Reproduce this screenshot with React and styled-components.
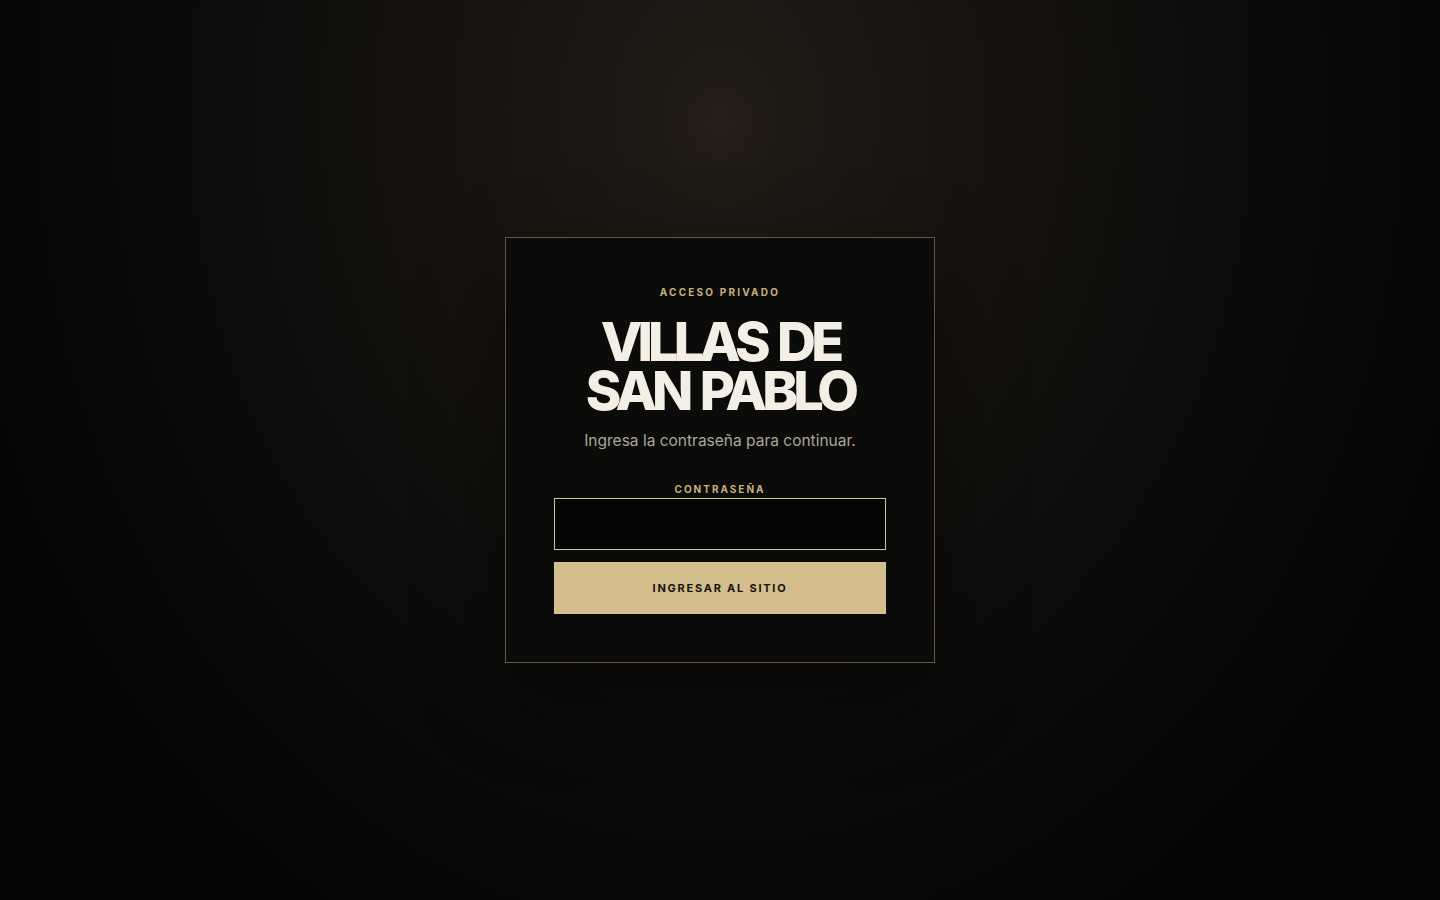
import React, { useState } from 'react'
import styled, { createGlobalStyle } from 'styled-components'

const GlobalStyle = createGlobalStyle`
  html, body {
    margin: 0;
    padding: 0;
    height: 100%;
    background: #060606;
  }
  #root {
    height: 100%;
  }
  * {
    box-sizing: border-box;
  }
`

const Page = styled.main`
  min-height: 100vh;
  display: flex;
  align-items: center;
  justify-content: center;
  font-family: Inter, "Noto Sans", sans-serif;
  background:
    radial-gradient(circle at 50% 14%, rgba(60, 34, 26, 0.3) 0, rgba(60, 34, 26, 0) 60px),
    radial-gradient(ellipse 760px 920px at 50% 12%, #201c16 0%, #16130f 35%, #0c0b0a 70%, #050505 100%);
  background-color: #050505;
`

const Card = styled.section`
  width: 430px;
  padding: 48px;
  border: 1px solid rgba(201, 176, 120, 0.45);
  background: #0b0b0a;
  box-shadow: 0 30px 80px rgba(0, 0, 0, 0.45);
  display: flex;
  flex-direction: column;
  align-items: center;
  text-align: center;
`

const Eyebrow = styled.p`
  margin: 0;
  font-size: 10px;
  line-height: 13px;
  font-weight: 700;
  letter-spacing: 0.22em;
  color: #c9b07c;
  text-transform: uppercase;
`

const Title = styled.h1`
  margin: 18px 0 0;
  font-family: Inter, "Noto Sans", sans-serif;
  font-size: 54px;
  line-height: 49px;
  font-weight: 800;
  letter-spacing: -0.09em;
  word-spacing: 0.08em;
  color: #f4efe4;
  text-transform: uppercase;
`

const Subtitle = styled.p`
  margin: 14px 0 0;
  font-size: 15.5px;
  line-height: 24px;
  font-weight: 400;
  color: #aaa59b;
`

const Form = styled.form`
  width: 100%;
  margin-top: 30px;
  display: flex;
  flex-direction: column;
  align-items: center;
`

const Label = styled.label`
  font-size: 10px;
  line-height: 13px;
  font-weight: 700;
  letter-spacing: 0.2em;
  color: #c9b07c;
  text-transform: uppercase;
  margin-bottom: 2px;
`

const Input = styled.input`
  width: 100%;
  height: 52px;
  border: 1px solid #d4c294;
  background: #050505;
  color: #f4efe4;
  padding: 0 16px;
  font-family: inherit;
  font-size: 16px;
  outline: none;
`

const Button = styled.button`
  width: 100%;
  height: 52px;
  margin-top: 12px;
  border: none;
  background: #d5be8e;
  color: #17130e;
  font-family: inherit;
  font-size: 11px;
  font-weight: 700;
  letter-spacing: 0.16em;
  text-transform: uppercase;
  cursor: pointer;
`

export default function App() {
  const [password, setPassword] = useState('')

  return (
    <>
      <GlobalStyle />
      <Page>
        <Card>
          <Eyebrow>Acceso privado</Eyebrow>
          <Title>Villas de<br />San Pablo</Title>
          <Subtitle>Ingresa la contraseña para continuar.</Subtitle>
          <Form onSubmit={(e) => e.preventDefault()}>
            <Label htmlFor="password">Contraseña</Label>
            <Input
              id="password"
              type="password"
              value={password}
              onChange={(e) => setPassword(e.target.value)}
            />
            <Button type="submit">Ingresar al sitio</Button>
          </Form>
        </Card>
      </Page>
    </>
  )
}
